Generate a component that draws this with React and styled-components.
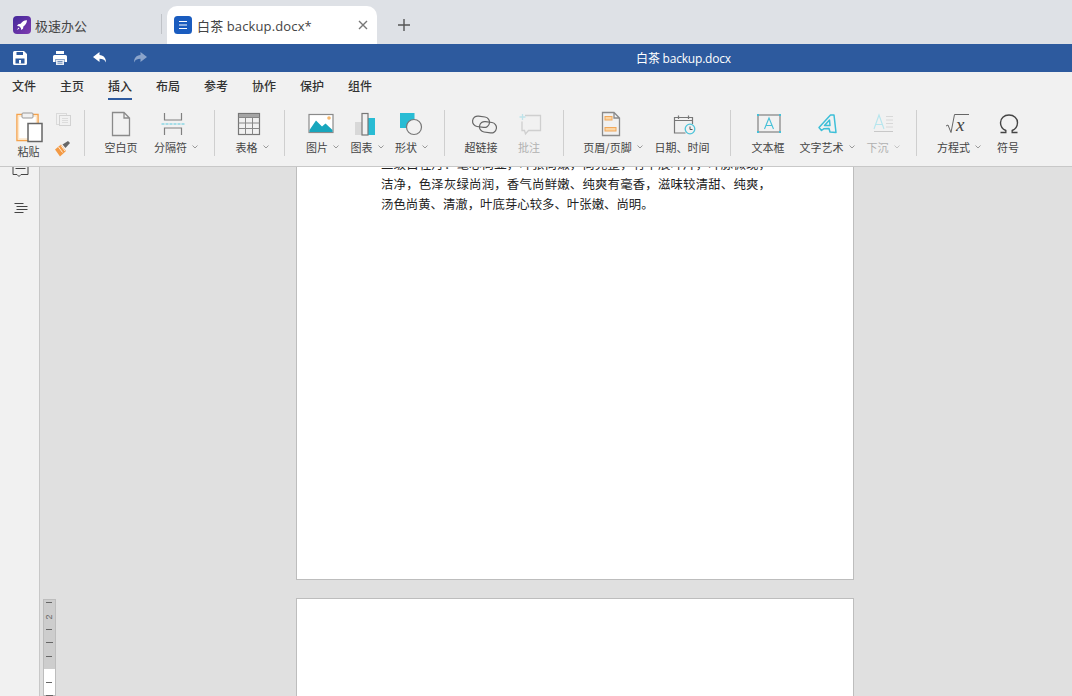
import React from 'react';
import styled, { createGlobalStyle } from 'styled-components';

const GlobalStyle = createGlobalStyle`
  html, body {
    margin: 0;
    padding: 0;
    height: 100%;
    overflow: hidden;
  }
  body {
    font-family: "Noto Sans CJK SC", "Noto Sans", sans-serif;
    color: #333;
  }
  #root {
    height: 100%;
  }
`;

const Shell = styled.div`
  display: flex;
  flex-direction: column;
  width: 1072px;
  height: 696px;
  overflow: hidden;
`;

/* tabs */
const TabBar = styled.div`
  display: flex;
  align-items: flex-end;
  height: 44px;
  flex: none;
  background: #dee1e6;
`;

const HomeTab = styled.div`
  display: flex;
  align-items: center;
  gap: 4px;
  width: 148px;
  height: 38px;
  padding-left: 13px;
  font-size: 13px;
  color: #444;
`;

const TabDivider = styled.div`
  width: 1px;
  height: 20px;
  margin: 0 5px 10px 0;
  background: #bfc2c7;
`;

const ActiveTab = styled.div`
  display: flex;
  align-items: center;
  gap: 5px;
  width: 210px;
  height: 38px;
  box-sizing: border-box;
  padding: 0 8px 0 7px;
  background: #fff;
  border-radius: 10px 10px 0 0;
  font-family: "Open Sans", "Noto Sans CJK SC", sans-serif;
  font-size: 13px;
  letter-spacing: 0.13px;
  color: #444;
`;

const TabTitle = styled.span`
  flex: 1;
  white-space: nowrap;
`;

const AddTab = styled.div`
  display: flex;
  align-items: center;
  justify-content: center;
  width: 54px;
  height: 38px;
`;

/* quick access */
const TitleBar = styled.div`
  display: flex;
  align-items: center;
  height: 28px;
  flex: none;
  background: #2d5a9e;
`;

const QuickTools = styled.div`
  display: flex;
  align-items: center;
  gap: 20px;
  width: 285px;
  padding-left: 10px;
`;

const DocName = styled.div`
  flex: 1;
  text-align: center;
  font-family: "Open Sans", "Noto Sans CJK SC", sans-serif;
  font-size: 12px;
  letter-spacing: -0.2px;
  color: #fff;
`;

/* menu */
const MenuBar = styled.div`
  display: flex;
  gap: 24px;
  height: 28px;
  flex: none;
  box-sizing: border-box;
  padding-left: 12px;
  background: #f1f1f1;
`;

const MenuItem = styled.div`
  height: 28px;
  box-sizing: border-box;
  line-height: 27px;
  font-size: 12px;
  font-weight: 500;
  color: #333;
  border-bottom: 2px solid ${(p) => (p.$active ? '#2d5a9e' : 'transparent')};
`;

/* ribbon */
const Ribbon = styled.div`
  display: flex;
  align-items: flex-start;
  height: 67px;
  flex: none;
  box-sizing: border-box;
  padding-top: 8px;
  background: #f1f1f1;
  border-bottom: 1px solid #c8c8c8;
`;

const Group = styled.div`
  display: flex;
  width: ${(p) => p.$w}px;
  box-sizing: border-box;
  padding-left: ${(p) => p.$pad || 0}px;
`;

const Sep = styled.div`
  width: 1px;
  height: 46px;
  margin-top: 2px;
  flex: none;
  background: #cfcfcf;
`;

const Tool = styled.div`
  display: flex;
  flex-direction: column;
  align-items: center;
  width: ${(p) => p.$w}px;
  flex: none;
`;

const ToolIcon = styled.svg`
  display: block;
  width: 32px;
  height: 32px;
  margin-left: ${(p) => p.$shift || 0}px;
  fill: none;
`;

const ToolLabel = styled.div`
  display: flex;
  align-items: center;
  gap: 5px;
  height: 14px;
  font-size: 11px;
  line-height: 14px;
  white-space: nowrap;
  color: ${(p) => (p.$off ? '#b0b0b0' : '#444')};
`;

const Caret = styled.svg`
  width: 6px;
  height: 4px;
  fill: none;
  stroke: ${(p) => (p.$off ? '#c4c4c4' : '#999')};
`;

const PasteTool = styled.div`
  display: flex;
  flex-direction: column;
  align-items: center;
  width: 41px;
  margin-left: 8px;
`;

const PasteIcon = styled.svg`
  display: block;
  width: 32px;
  height: 36px;
  fill: none;
`;

const PasteLabel = styled.div`
  font-size: 11px;
  line-height: 14px;
  color: #444;
`;

const SmallTools = styled.div`
  display: flex;
  flex-direction: column;
  gap: 11px;
  margin: 3px 0 0 3px;
`;

const SmallIcon = styled.svg`
  display: block;
  width: 20px;
  height: 18px;
  fill: none;
`;

/* workspace */
const Workspace = styled.div`
  display: flex;
  flex: 1;
  min-height: 0;
`;

const Side = styled.div`
  display: flex;
  flex-direction: column;
  align-items: center;
  gap: 20px;
  width: 39px;
  flex: none;
  overflow: hidden;
  background: #f1f1f1;
  border-right: 1px solid #c8c8c8;
`;

const SideIcon = styled.svg`
  display: block;
  width: 20px;
  height: 20px;
  flex: none;
  fill: none;
  stroke: #444;
  margin-top: ${(p) => p.$top || 0}px;
`;

const Canvas = styled.div`
  display: flex;
  flex: 1;
  overflow: hidden;
  background: #e0e0e0;
`;

const RulerSvg = styled.svg`
  display: block;
  width: 13px;
  height: 97px;
  flex: none;
  margin: 432px 0 0 3px;
`;

const Pages = styled.div`
  display: flex;
  flex-direction: column;
  gap: 18px;
  width: 558px;
  flex: none;
  margin-left: 240px;
`;

const Page = styled.div`
  width: 558px;
  height: ${(p) => p.$h}px;
  flex: none;
  box-sizing: border-box;
  overflow: hidden;
  background: #fff;
  border: 1px solid #bdbdbd;
  border-top-width: ${(p) => (p.$cut ? 0 : 1)}px;
`;

const Body = styled.div`
  width: 390px;
  margin: -13px 0 0 84px;
  font-size: 12.4px;
  line-height: 20px;
  color: #222;
`;

const BodyLine = styled.div`
  text-align: ${(p) => (p.$fill ? 'justify' : 'left')};
  text-align-last: ${(p) => (p.$fill ? 'justify' : 'left')};
  text-justify: inter-character;
`;

const ChevronDown = ({ off }) => (
  <Caret viewBox="0 0 6 4" $off={off}>
    <path d="M.5.5 3 3 5.5.5" />
  </Caret>
);

const Rocket = () => (
  <svg width="18" height="18" viewBox="0 0 18 18">
    <defs>
      <linearGradient id="rk" x1="0" y1="0" x2="1" y2="1">
        <stop offset="0" stopColor="#43289a" />
        <stop offset="1" stopColor="#7f3bb0" />
      </linearGradient>
    </defs>
    <rect width="18" height="18" rx="4" fill="url(#rk)" />
    <path d="M13.600 4.200c-2.600.2-4.600 1.400-6 3.600L5.200 8.200 4 10l2.200.3 1.700 1.600.3 2.100 1.800-1.200.4-2.400c2.200-1.400 3.400-3.500 3.600-6.200z" fill="#fff" />
    <path d="M5.400 11.600 4 14l2.400-1.400z" fill="#fff" />
  </svg>
);

const DocBadge = () => (
  <svg width="18" height="18" viewBox="0 0 18 18">
    <rect width="18" height="18" rx="3.500" fill="#1a5cbf" />
    <path d="M5 5.500h8M5 9h8M5 12.500h8" stroke="#fff" strokeWidth="1.100" />
  </svg>
);

const CloseX = () => (
  <svg width="12" height="12" viewBox="0 0 12 12">
    <path d="M2 2l8 8M10 2l-8 8" stroke="#777" strokeWidth="1.400" />
  </svg>
);

const Plus = () => (
  <svg width="14" height="14" viewBox="0 0 14 14">
    <path d="M7 1v12M1 7h12" stroke="#555" strokeWidth="1.400" />
  </svg>
);

const SaveIcon = () => (
  <svg width="20" height="20" viewBox="0 0 20 20">
    <path d="M4.500 3H14l3 3v9.500a1.500 1.500 0 0 1-1.500 1.500h-11A1.500 1.500 0 0 1 3 15.500v-11A1.500 1.500 0 0 1 4.500 3z" fill="#fff" />
    <rect x="6.500" y="4" width="6.500" height="3" fill="#2d5a9e" />
    <rect x="5.500" y="10.500" width="9" height="5" fill="#2d5a9e" />
    <rect x="9" y="12" width="2" height="3.500" fill="#fff" />
  </svg>
);

const PrintIcon = () => (
  <svg width="20" height="20" viewBox="0 0 20 20">
    <path d="M6 3h8v3H6z" fill="#fff" />
    <path d="M4.500 7h11A1.500 1.500 0 0 1 17 8.500V14h-2.500v-3h-9v3H3V8.500A1.500 1.500 0 0 1 4.500 7z" fill="#fff" />
    <rect x="6" y="11.500" width="8" height="5.500" fill="#e8edf5" />
    <path d="M7.500 13.500h5M7.500 15.200h5" stroke="#6f8db9" />
  </svg>
);

const UndoIcon = ({ flip, color }) => (
  <svg width="20" height="20" viewBox="0 0 20 20" style={flip ? { transform: 'scaleX(-1)' } : undefined}>
    <path d="M9.500 4 3 9l6.500 5v-3.200c3 0 5 .7 6.500 3.700 0-4.500-2.300-7.200-6.500-7.500z" fill={color} />
  </svg>
);

const icons = {
  blank: (
    <path d="M7.500 4.500h11.500l5.500 5.500v17.500H7.500zM19 4.500V10h5.500" stroke="#8a8a8a" strokeWidth="1.300" />
  ),
  breaker: (
    <>
      <path d="M7.500 5v7h17V5M7.500 27v-7h17v7" stroke="#808080" strokeWidth="1.200" />
      <path d="M4.500 16h23" stroke="#a5dde7" strokeWidth="2" strokeDasharray="3 1" />
    </>
  ),
  table: (
    <>
      <rect x="5.500" y="5.500" width="21" height="21" stroke="#777" strokeWidth="1.200" />
      <rect x="6" y="6" width="20" height="3.500" fill="#a5a5a5" />
      <path d="M5.500 9.500h21M5.500 15h21M5.500 20.500h21M12.500 9.500v17M19.500 9.500v17" stroke="#888" />
    </>
  ),
  image: (
    <>
      <rect x="4" y="6.500" width="24" height="18" fill="#fff" stroke="#8a8a8a" strokeWidth="1.200" />
      <path d="M4.500 22 11 12.500l6 6 3.500-3 7 6.500v2h-23z" fill="#18a6bd" />
      <circle cx="24" cy="10" r="1.800" fill="#f5b66b" />
    </>
  ),
  chart: (
    <>
      <rect x="6" y="14" width="7" height="13" fill="#d8d8d8" />
      <rect x="19" y="10" width="7" height="17" fill="#29bcd4" />
      <rect x="13" y="5.500" width="6" height="21.500" fill="#f1f1f1" stroke="#777" strokeWidth="1.200" />
    </>
  ),
  shape: (
    <>
      <rect x="9" y="5" width="14.500" height="15" fill="#29bcd4" />
      <circle cx="23" cy="19" r="7.500" fill="#f1f1f1" stroke="#777" strokeWidth="1.200" />
    </>
  ),
  link: (
    <g stroke="#666" strokeWidth="1.200">
      <rect x="7.500" y="8.500" width="17" height="10.500" rx="5.200" transform="rotate(8 16 14)" />
      <rect x="14.500" y="14" width="17" height="10.500" rx="5.200" transform="rotate(8 23 19)" />
    </g>
  ),
  comment: (
    <>
      <path d="M12 7.500h15.500v15h-12l-3 3.500-1-3.500H9v-9" stroke="#cfcfcf" strokeWidth="1.300" />
      <path d="M9.500 6v6M6.500 9h6" stroke="#bfe3ea" strokeWidth="1.300" />
    </>
  ),
  header: (
    <>
      <path d="M7.500 4.500h11.500l5.500 5.500v17.500H7.500zM19 4.500V10h5.500" stroke="#8a8a8a" strokeWidth="1.300" />
      <rect x="10" y="8.500" width="7" height="3.500" fill="#fcd6a4" stroke="#f2a85a" />
      <rect x="10" y="19.500" width="11" height="3.500" fill="#fcd6a4" stroke="#f2a85a" />
    </>
  ),
  date: (
    <>
      <path d="M24.500 16V9.500h-18v15.500h11" stroke="#777" strokeWidth="1.200" />
      <path d="M6.500 12.500h18M10.500 7.500v3.500M20.500 7.500v3.500" stroke="#777" strokeWidth="1.200" />
      <circle cx="22" cy="21" r="4.800" fill="#f1f1f1" stroke="#4ec4da" strokeWidth="1.300" />
      <path d="M22 18.500V21.500h2.500" stroke="#555" />
    </>
  ),
  textbox: (
    <>
      <rect x="5" y="7" width="22" height="17" stroke="#8a8a8a" strokeWidth="1.300" />
      <path d="M11.500 21 16 10l4.500 11M13 17.500h6" stroke="#45c0d8" strokeWidth="1.100" />
      <path d="M4 6h2v2H4zM26 6h2v2h-2zM4 23h2v2H4zM26 23h2v2h-2z" fill="#45c0d8" />
    </>
  ),
  wordart: (
    <>
      <path d="M9 19.500 20.500 7h3.500l2 17.500-6-.5-1-3.500-5 .2-2.500 1.800z" stroke="#3dbfd8" strokeWidth="1.500" strokeLinejoin="round" />
      <path d="M14.500 17.500 19.500 12l.5 5.500z" stroke="#3dbfd8" strokeWidth="1.500" strokeLinejoin="round" />
    </>
  ),
  dropcap: (
    <>
      <path d="M8 21 13 7l5 14M9.800 16.500h6.400" stroke="#b6e6ee" strokeWidth="1.100" />
      <path d="M20 8.500h7M20 12h7M20 15.500h7M20 19h7" stroke="#d8d8d8" />
      <path d="M8 23.500h19" stroke="#c8c8c8" />
    </>
  ),
  omega: (
    <path d="M7.500 24.500h5.300v-2c-3.300-1.500-5.300-4.300-5.300-7.800 0-4.500 3.500-7.700 8.500-7.700s8.500 3.200 8.500 7.700c0 3.500-2 6.300-5.300 7.800v2h5.300" stroke="#444" strokeWidth="1.400" />
  ),
};

const EquationIcon = () => (
  <ToolIcon viewBox="0 0 32 32" $shift={-2}>
    <path d="M4 18l2-1 3 7.500 3.500-18H27" stroke="#666" strokeWidth="1" />
    <text x="14" y="23" fontFamily="Liberation Serif, serif" fontStyle="italic" fontSize="19" fill="#444">x</text>
  </ToolIcon>
);

const RibbonTool = ({ w, icon, label, caret, off, shift }) => (
  <Tool $w={w}>
    <ToolIcon viewBox="0 0 32 32" $shift={shift}>{icons[icon]}</ToolIcon>
    <ToolLabel $off={off}>
      {label}
      {caret && <ChevronDown off={off} />}
    </ToolLabel>
  </Tool>
);

const Ruler = () => (
  <RulerSvg viewBox="0 0 13 97">
    <rect x=".5" y=".5" width="12" height="96" fill="#fff" stroke="#bdbdbd" />
    <rect x="1" y="1" width="11" height="69" fill="#cdcdcd" />
    <path d="M3 3.500h6M3 30.500h6M3 43.500h7M3 57.500h6M3 83.500h6M3 96.500h7" stroke="#666" />
    <text x="6.500" y="18" fontSize="9" fontFamily="Liberation Sans, sans-serif" fill="#666" textAnchor="middle" dominantBaseline="middle" transform="rotate(-90 6.500 18)">2</text>
  </RulerSvg>
);

const menu = ['文件', '主页', '插入', '布局', '参考', '协作', '保护', '组件'];

const bodyLines = [
  '二级白牡丹\uFF1A毫心尚显\uFF0C叶张尚嫩\uFF0C尚完整\uFF0C有平展叶片\uFF0C叶脉微现\uFF0C',
  '洁净\uFF0C色泽灰绿尚润\uFF0C香气尚鲜嫩\u3001纯爽有毫香\uFF0C滋味较清甜\u3001纯爽\uFF0C',
  '汤色尚黄\u3001清澈\uFF0C叶底芽心较多\u3001叶张嫩\u3001尚明\u3002',
];

const App = () => (
  <Shell>
    <GlobalStyle />
    <TabBar>
      <HomeTab>
        <Rocket />
        极速办公
      </HomeTab>
      <TabDivider />
      <ActiveTab>
        <DocBadge />
        <TabTitle>白茶 backup.docx*</TabTitle>
        <CloseX />
      </ActiveTab>
      <AddTab>
        <Plus />
      </AddTab>
    </TabBar>

    <TitleBar>
      <QuickTools>
        <SaveIcon />
        <PrintIcon />
        <UndoIcon color="#fff" />
        <UndoIcon flip color="#8ba4cb" />
      </QuickTools>
      <DocName>白茶 backup.docx</DocName>
    </TitleBar>

    <MenuBar>
      {menu.map((m) => (
        <MenuItem key={m} $active={m === '插入'}>{m}</MenuItem>
      ))}
    </MenuBar>

    <Ribbon>
      <Group $w={84}>
        <PasteTool>
          <PasteIcon viewBox="0 0 32 36">
            <rect x="4" y="6.500" width="21" height="26" fill="#fff" stroke="#f5a24c" strokeWidth="1.500" />
            <rect x="5.500" y="8" width="18" height="23" stroke="#fde6c8" strokeWidth="1.500" />
            <rect x="9" y="5" width="11" height="5" rx="1" fill="#f1f1f1" stroke="#999" />
            <rect x="15" y="15.500" width="14" height="18" fill="#fff" stroke="#666" strokeWidth="1.500" />
          </PasteIcon>
          <PasteLabel>粘贴</PasteLabel>
        </PasteTool>
        <SmallTools>
          <SmallIcon viewBox="0 0 20 18">
            <rect x="4.500" y="2.500" width="10" height="11" stroke="#dadada" />
            <rect x="7.500" y="4.500" width="11" height="10" fill="#f1f1f1" stroke="#d2d2d2" />
            <path d="M10 7.500h6M10 9.500h6M10 11.500h6" stroke="#dcdcdc" />
          </SmallIcon>
          <SmallIcon viewBox="0 0 20 18">
            <path d="M3 9.500 9 4.500l5 6.500-6 5.500z" fill="#f39a45" />
            <path d="M6.500 7 10.500 12.500M9 5.500l4 5.500" stroke="#fff" strokeWidth=".8" />
            <path d="M10.500 4.500 16 1l2 2-4.500 5z" fill="#666" />
          </SmallIcon>
        </SmallTools>
      </Group>
      <Sep />
      <Group $w={129} $pad={7}>
        <RibbonTool w={58} icon="blank" label="空白页" />
        <RibbonTool w={52} icon="breaker" label="分隔符" caret shift={-6} />
      </Group>
      <Sep />
      <Group $w={69} $pad={10}>
        <RibbonTool w={54} icon="table" label="表格" caret shift={-6} />
      </Group>
      <Sep />
      <Group $w={159} $pad={15}>
        <RibbonTool w={45} icon="image" label="图片" caret shift={-4} />
        <RibbonTool w={44} icon="chart" label="图表" caret shift={-4} />
        <RibbonTool w={45} icon="shape" label="形状" caret shift={-10} />
      </Group>
      <Sep />
      <Group $w={118} $pad={10}>
        <RibbonTool w={52} icon="link" label="超链接" />
        <RibbonTool w={44} icon="comment" label="批注" off />
      </Group>
      <Sep />
      <Group $w={166} $pad={12}>
        <RibbonTool w={74} icon="header" label="页眉/页脚" caret shift={-5} />
        <RibbonTool w={64} icon="date" label="日期、时间" shift={4} />
      </Group>
      <Sep />
      <Group $w={185} $pad={10}>
        <RibbonTool w={54} icon="textbox" label="文本框" shift={2} />
        <RibbonTool w={64} icon="wordart" label="文字艺术" caret shift={-2} />
        <RibbonTool w={48} icon="dropcap" label="下沉" caret off shift={-2} />
      </Group>
      <Sep />
      <Group $w={155} $pad={14}>
        <Tool $w={56}>
          <EquationIcon />
          <ToolLabel>
            方程式
            <ChevronDown />
          </ToolLabel>
        </Tool>
        <RibbonTool w={42} icon="omega" label="符号" shift={1} />
      </Group>
    </Ribbon>

    <Workspace>
      <Side>
        <SideIcon viewBox="0 0 20 20" $top={-9}>
          <path d="M3 3v13.500h4l2 2 2-2h7V3M5.500 10.500h10" />
        </SideIcon>
        <SideIcon viewBox="0 0 20 20">
          <path d="M4.500 5.500h9M6.500 8.500h11M6.500 11.500h11M4.500 14.500h9" />
        </SideIcon>
      </Side>
      <Canvas>
        <Ruler />
        <Pages>
          <Page $h={413} $cut>
            <Body>
              {bodyLines.map((line, i) => (
                <BodyLine key={i} $fill={i < bodyLines.length - 1}>{line}</BodyLine>
              ))}
            </Body>
          </Page>
          <Page $h={200} />
        </Pages>
      </Canvas>
    </Workspace>
  </Shell>
);

export default App;
